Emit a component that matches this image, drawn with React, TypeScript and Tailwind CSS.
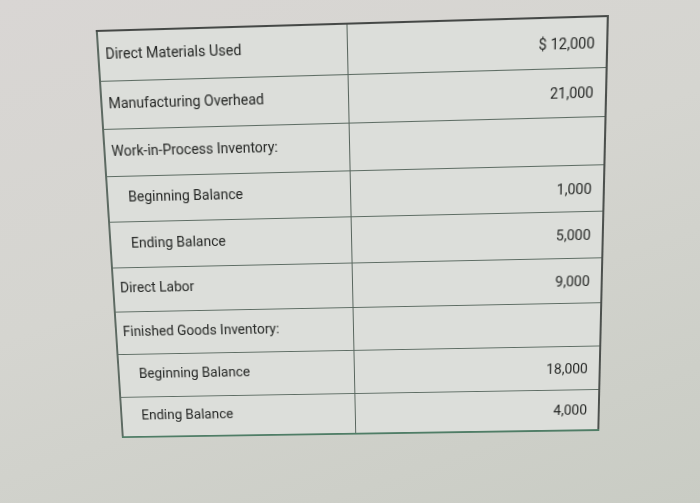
const rows: { label: string; value: string; indent?: boolean; h: number }[] = [
  { label: "Direct Materials Used", value: "$ 12,000", h: 48 },
  { label: "Manufacturing Overhead", value: "21,000", h: 47 },
  { label: "Work-in-Process Inventory:", value: "", h: 47 },
  { label: "Beginning Balance", value: "1,000", indent: true, h: 46 },
  { label: "Ending Balance", value: "5,000", indent: true, h: 47 },
  { label: "Direct Labor", value: "9,000", h: 46 },
  { label: "Finished Goods Inventory:", value: "", h: 45 },
  { label: "Beginning Balance", value: "18,000", indent: true, h: 46 },
  { label: "Ending Balance", value: "4,000", indent: true, h: 44 },
];

export default function App() {
  return (
    <div className="h-[503px] w-[700px] overflow-hidden bg-[linear-gradient(160deg,#d9d6d4_0%,#d5d5d0_45%,#c9ccc4_100%)] pl-[107px] pt-[27px] font-['Roboto',_'Liberation_Sans',_sans-serif] text-[14px] text-[#262826]">
      <table className="w-[495px] border-collapse border-2 border-t-[#454846] border-r-[#4c504d] border-b-[#4f7d66] border-l-[#5d6a62] bg-[#dcdeda] [transform:perspective(1000px)_rotateZ(-1.6deg)_rotateX(-10deg)_rotateY(-2deg)_skewX(-0.4deg)]">
        <tbody>
          {rows.map((r, i) => (
            <tr key={i} className="border-b border-[#5e6d64] last:border-b-0" style={{ height: r.h }}>
              <td className={`w-[243px] border-r border-[#58655d] ${r.indent ? "pl-[20px]" : "pl-[6px]"} pb-[3px] align-middle`}>
                {r.label}
              </td>
              <td className="pr-[11px] pt-[2px] text-right align-middle">{r.value}</td>
            </tr>
          ))}
        </tbody>
      </table>
    </div>
  );
}
